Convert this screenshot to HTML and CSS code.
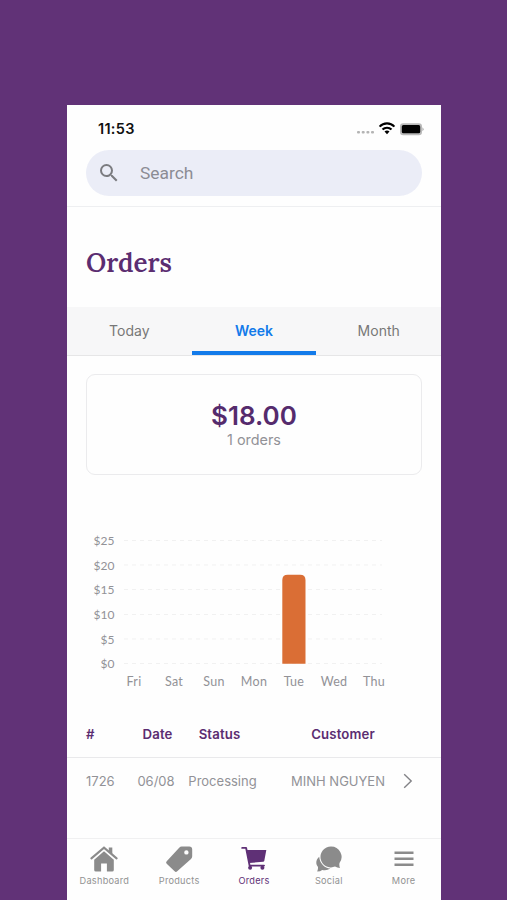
FILE: index.html
```html
<!DOCTYPE html>
<html lang="en">
  <head>
    <meta charset="UTF-8" />
    <meta name="viewport" content="width=device-width, initial-scale=1.0" />
    <title>Orders</title>
    <link rel="stylesheet" href="styles.css">
  </head>
  <body>
    <div class="phone">
      <header>
        <div class="status-bar">
          <span class="time">11:53</span>
          <svg class="status-icons" width="68" height="16" viewBox="0 0 68 16">
            <g fill="#b4b4b4">
              <rect x="1" y="10" width="3" height="2.6" rx="1" />
              <rect x="5.7" y="10" width="3" height="2.6" rx="1" />
              <rect x="10.4" y="10" width="3" height="2.6" rx="1" />
              <rect x="15" y="10" width="3" height="2.6" rx="1" />
            </g>
            <g fill="none" stroke="#000" stroke-width="2.1">
              <path d="M23.6 5.6a10.2 10.2 0 0 1 14.8 0" />
              <path d="M26.5 8.6a6.3 6.3 0 0 1 9 0" />
            </g>
            <path d="M31 13.2l-2.5-2.6a3.6 3.6 0 0 1 5 0z" fill="#000" />
            <rect x="44" y="2.200" width="22" height="12" rx="3.2" fill="#b9b9b9" />
            <rect x="45.800" y="4.1" width="18.400" height="8.2" rx="1.6" fill="#000" />
            <path d="M66.5 6.3q2 2 0 4z" fill="#999" />
          </svg>
        </div>
        <div class="search">
          <svg class="search-icon" width="24" height="24" viewBox="0 0 24 24">
            <path d="M15.5 14h-.79l-.28-.27A6.47 6.47 0 0 0 16 9.5 6.5 6.5 0 1 0 9.5 16c1.61 0 3.09-.59 4.23-1.57l.27.28v.79l5 4.99L20.49 19l-4.99-5zm-6 0C7.01 14 5 11.99 5 9.5S7.01 5 9.5 5 14 7.01 14 9.5 11.99 14 9.5 14z" fill="#7b7c80" />
          </svg>
          <span>Search</span>
        </div>
      </header>

      <main>
        <h1>Orders</h1>
        <nav class="tabs">
          <a class="tab">Today</a>
          <a class="tab active">Week</a>
          <a class="tab">Month</a>
        </nav>

        <div class="summary">
          <strong class="total">$18.00</strong>
          <span class="count">1 orders</span>
        </div>

        <svg class="chart" width="336" height="170" viewBox="0 0 336 170">
          <!-- Grid lines -->
          <g class="grid-lines">
            <path d="M38 15.5H296" />
            <path d="M38 40H296" />
            <path d="M38 64.5H296" />
            <path d="M38 89.5H296" />
            <path d="M38 114H296" />
            <path d="M38 138.5H296" />
          </g>
          <path d="M196.3 138.7V55.1q0-5.4 5.4-5.4h12.4q5.4 0 5.4 5.4v83.6z" fill="#da6e35" />
          <!-- Amounts -->
          <g class="axis-label amounts">
            <text x="28.5" y="20">$25</text>
            <text x="28.5" y="44.8">$20</text>
            <text x="28.5" y="69.3">$15</text>
            <text x="28.5" y="94">$10</text>
            <text x="28.5" y="118.8">$5</text>
            <text x="28.5" y="143.4">$0</text>
          </g>
          <!-- Days -->
          <g class="axis-label days">
            <text x="48" y="160.6">Fri</text>
            <text x="88" y="160.6">Sat</text>
            <text x="128" y="160.6">Sun</text>
            <text x="168" y="160.6">Mon</text>
            <text x="208" y="160.6">Tue</text>
            <text x="248" y="160.6">Wed</text>
            <text x="288" y="160.6">Thu</text>
          </g>
        </svg>

        <div class="orders">
          <div class="row head">
            <span class="number">#</span>
            <span class="date">Date</span>
            <span class="status">Status</span>
            <span class="customer">Customer</span>
          </div>
          <div class="row">
            <span class="number">1726</span>
            <span class="date">06/08</span>
            <span class="status">Processing</span>
            <span class="customer">MINH NGUYEN</span>
            <svg class="chevron" width="10" height="16" viewBox="0 0 10 16">
              <path d="M1.2 1.2L8.2 8l-7 6.8" />
            </svg>
          </div>
        </div>
      </main>

      <footer>
        <a class="link">
          <svg width="28" height="28" viewBox="0 0 28 28">
            <path d="M18.8 2.5h3.5v7.2l-3.5-3.2z" />
            <path d="M1.4 13.4L14 2.7l12.6 10.7" fill="none" stroke="#8b8b8b" stroke-width="2.1" stroke-linecap="round" />
            <path d="M14 6.3l9.8 8.4v10.2q0 1.7-1.7 1.7h-5.2v-8.2h-5.8v8.2H5.9q-1.7 0-1.7-1.7V14.7z" />
          </svg>
          <span>Dashboard</span>
        </a>
        <a class="link">
          <svg width="28" height="28" viewBox="0 0 28 28">
            <path fill-rule="evenodd" d="M16.8 1.6h7.4q3 0 3 3v6.6q0 1.6-1.2 2.7L12.2 26.3q-1.3 1.2-2.6 0L1.7 18.7q-1.3-1.3 0-2.5L14.2 2.7q1-1.1 2.6-1.1zm4.6 3.6a2.2 2.2 0 1 0 0 4.4 2.2 2.2 0 0 0 0-4.4z" />
          </svg>
          <span>Products</span>
        </a>
        <a class="link current">
          <svg width="28" height="28" viewBox="0 0 28 28">
            <path d="M2.2 2.900h3.900l3.500 17.700h14.400" fill="none" stroke="#5f3076" stroke-width="1.9" stroke-linecap="round" stroke-linejoin="round" />
            <path d="M6.2 4.900h20.100l-2 10.800q-.2 1-1.2 1.100L9.200 18z" />
            <circle cx="10.1" cy="22.800" r="2" />
            <circle cx="22.4" cy="22.800" r="2" />
          </svg>
          <span>Orders</span>
        </a>
        <a class="link">
          <svg width="28" height="28" viewBox="0 0 28 28">
            <path d="M4.2 11.7Q1 14.4 1.3 18.3q.2 2.3 1.700 3.800.3 2-.8 4.500 3.200-.2 5-1.700 4.200 1.300 8.200-1.400C9.500 23.300 4.800 18.400 4.200 11.700z" />
            <path d="M16 1.4a10.500 10.500 0 1 0 4 20.200q2.200 1.200 5 1.500-1-2.300-.5-5A10.500 10.500 0 0 0 16 1.400z" />
          </svg>
          <span>Social</span>
        </a>
        <a class="link">
          <svg width="28" height="28" viewBox="0 0 28 28">
            <path d="M4.500 6.500h19v2.600h-19zM4.500 12.500h19v2.600h-19zM4.500 18.400h19v2.600h-19z" />
          </svg>
          <span>More</span>
        </a>
      </footer>
    </div>
  </body>
</html>
```

FILE: styles.css
```css
* {
  margin: 0;
  padding: 0;
  box-sizing: border-box;
}

body {
  font-family: Inter, "Liberation Sans", sans-serif;
  background-color: #613277; /* Purple backdrop */
  height: 900px;
  padding: 105px 66px 0 67px;
  overflow: hidden;
}

.phone {
  background-color: #fefefe;
  height: 795px;
  display: flex;
  flex-direction: column;
}

header {
  height: 102px;
  padding: 0 19px;
  border-bottom: 1px solid #eeeff1;
}

.status-bar {
  height: 45px;
  display: flex;
  align-items: center;
  justify-content: space-between;
  padding: 2px 0 0 12px;
}

.time {
  font-size: 14.5px;
  letter-spacing: 0.3px;
  font-weight: 600;
  color: #111;
}

.status-icons {
  margin-right: -2px;
}

.search {
  height: 46px;
  border-radius: 23px;
  background-color: #ebedf7;
  display: flex;
  align-items: center;
  padding-left: 11px;
  gap: 19px;
  font-family: Roboto, sans-serif;
  font-size: 17.4px;
  color: #8b8c94;
}

main {
  flex: 1;
}

h1 {
  font-family: Lora, "Noto Serif", "Liberation Serif", serif;
  font-size: 26px;
  line-height: 100px;
  height: 100px;
  padding: 0 19px;
  padding-top: 6px;
  font-weight: 600;
  color: #5b2d71;
}

.tabs {
  display: flex;
  height: 49px;
  background-color: #f7f7f8;
  border-bottom: 1px solid #e6e6e7;
}

.tab {
  flex: 1;
  text-align: center;
  font-size: 14px;
  line-height: 48px;
  color: #777;
}

.tab.active {
  font-weight: 600;
  color: #137bea;
  border-bottom: 4px solid #137bea; /* Selected marker */
}

.summary {
  margin: 18px 19px 0;
  height: 101px;
  border: 1px solid #ebebed;
  border-radius: 9px;
  display: flex;
  flex-direction: column;
  align-items: center;
  padding-top: 25px;
}

.total {
  font-size: 26px;
  line-height: 32px;
  font-weight: 600;
  color: #552b6d;
}

.count {
  font-size: 14.4px;
  line-height: 16px;
  color: #929297;
}

.chart {
  display: block;
  margin: 50px 19px 0;
}

.grid-lines {
  stroke: #f1f1f1;
  stroke-width: 1;
  stroke-dasharray: 4 4;
}

.axis-label {
  font-family: Lato, sans-serif;
  font-size: 12.5px;
  fill: #929297;
}

.amounts {
  font-size: 12px;
  text-anchor: end;
}

.days {
  text-anchor: middle;
  letter-spacing: 0.3px;
}

.orders {
  margin-top: 17px;
}

.row {
  height: 46px;
  display: grid;
  grid-template-columns: 42px 56px 77px 1fr 34px;
  align-items: center;
  padding-left: 19px;
  padding-bottom: 1px;
  font-size: 13px;
  color: #929297;
  white-space: nowrap;
}

.row.head {
  font-size: 13.2px;
  letter-spacing: 0.15px;
  font-weight: 600;
  color: #5b2d71;
  border-bottom: 1px solid #e9e9eb;
}

.date,
.status,
.customer {
  text-align: center;
}

.head .date {
  padding-left: 3px;
}

.head .status {
  padding-right: 6px;
}

.customer {
  padding-left: 8px;
}

.head .customer {
  padding-left: 18px;
}

/* Nudge the arrow left of the screen edge */
.chevron {
  margin-left: -4px;
  fill: none;
  stroke: #828286;
  stroke-width: 1.4;
}

footer {
  height: 62px;
  display: flex;
  border-top: 1px solid #f0f0f1;
  padding-top: 6px;
}

.link {
  flex: 1;
  display: flex;
  flex-direction: column;
  align-items: center;
  font-size: 9.2px;
  line-height: 11px;
  gap: 2px;
  letter-spacing: 0.25px;
  color: #929292;
  fill: #8b8b8b;
}

.link.current {
  color: #5f3076;
  fill: #5f3076;
}
```
